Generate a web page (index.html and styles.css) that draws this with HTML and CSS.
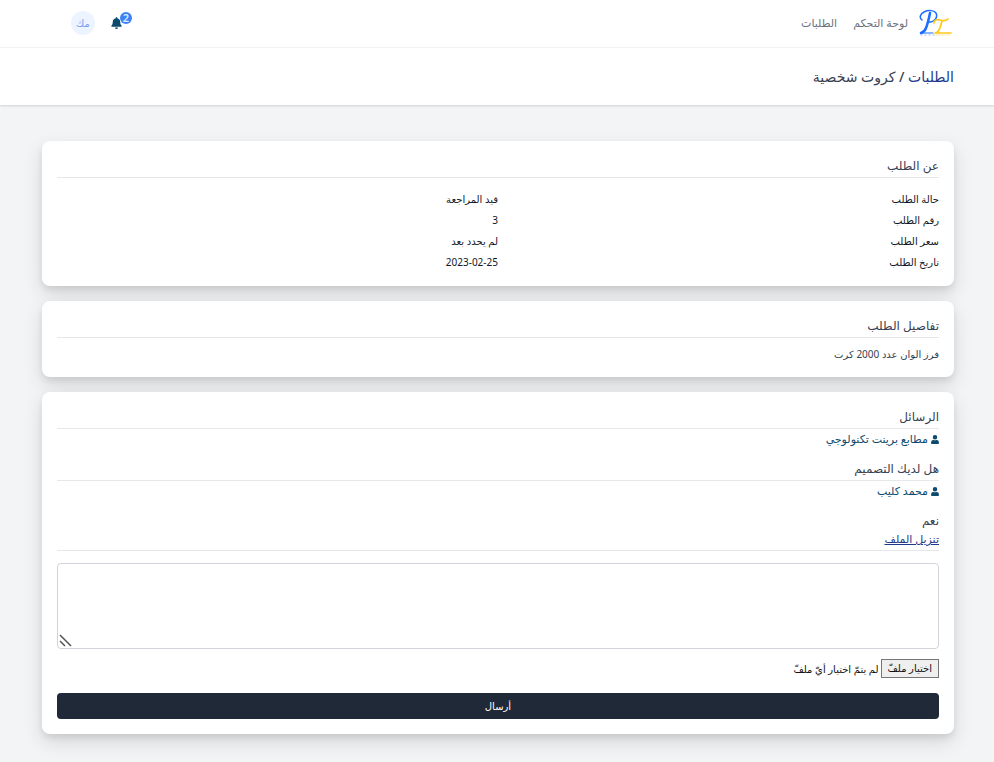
FILE: index.html
```
<!DOCTYPE html>
<html lang="ar" dir="rtl">
<head>
  <meta charset="UTF-8">
  <meta name="viewport" content="width=device-width, initial-scale=1.0">
  <title>الطلبات</title>
  <link rel="stylesheet" href="styles.css">
</head>
<body>

  <nav class="navbar">
    <div class="nav-links">
      <a href="#" class="logo" aria-label="PT">
        <svg width="34" height="28" viewBox="0 0 34 28" fill="none" stroke-linecap="round" stroke-linejoin="round">
          <path d="M3 11C0 9 1 5 5 3C9 1 15 1 17 4C19 8 16 12 12 13C11 13 10 13 9 13" stroke="#1a6dff" stroke-width="1.500"/>
          <path d="M11 4C10 9 9 14 7 19C6 22 5 23 2 24" stroke="#1a6dff" stroke-width="2.500"/>
          <path d="M2 24H14" stroke="#1a6dff" stroke-width="1.200"/>
          <path d="M15 14C15 11 18 10 21 11C24 12 27 12 29 10" stroke="#ffc81a" stroke-width="1.700"/>
          <path d="M23 12C22 16 21 19 20 21C19 23 18 24 16 24H32" stroke="#ffc81a" stroke-width="1.700"/>
          <path d="M2 26H15" stroke="#8fb8f5" stroke-width="1" stroke-dasharray="1 3"/>
          <path d="M17 26H31" stroke="#f7dc80" stroke-width="1" stroke-dasharray="1 2"/>
        </svg>
      </a>
      <a href="#">لوحة التحكم</a>
      <a href="#">الطلبات</a>
    </div>
    <div class="nav-user">
      <button type="button" class="bell" aria-label="الإشعارات">
        <svg width="11" height="12" viewBox="0 0 448 512" fill="#0c4a6e">
          <path d="M224 512c35 0 64-29 64-64H160c0 35 29 64 64 64zM439 362c-19-21-55-52-55-154 0-78-54-140-128-155V32a32 32 0 0 0-64 0v21C118 68 64 130 64 208c0 102-36 133-55 154-6 6-9 14-9 22 0 16 13 32 32 32h384c19 0 32-16 32-32 0-8-3-16-9-22z"/>
        </svg>
        <span class="badge">2</span>
      </button>
      <button type="button" class="avatar">مك</button>
    </div>
  </nav>

  <header class="page-header">
    <h1><a href="#">الطلبات</a> / كروت شخصية</h1>
  </header>

  <main class="content">
    <section class="card">
      <h2>عن الطلب</h2>
      <dl class="info">
        <dt>حالة الطلب</dt>
        <dd>قيد المراجعة</dd>
        <dt>رقم الطلب</dt>
        <dd>3</dd>
        <dt>سعر الطلب</dt>
        <dd>لم يحدد بعد</dd>
        <dt>تاريخ الطلب</dt>
        <dd>2023-02-25</dd>
      </dl>
    </section>

    <section class="card">
      <h2>تفاصيل الطلب</h2>
      <p class="details">فرز الوان عدد 2000 كرت</p>
    </section>

    <section class="card">
      <h2>الرسائل</h2>
      <article class="message">
        <h3>
          <svg width="8" height="9" viewBox="0 0 448 512" fill="#0c4a6e"><path d="M224 256a128 128 0 1 0 0-256 128 128 0 0 0 0 256zm90 32h-17a174 174 0 0 1-146 0h-17A134 134 0 0 0 0 422v42c0 27 21 48 48 48h352c27 0 48-21 48-48v-42a134 134 0 0 0-134-134z"/></svg>
          مطابع برينت تكنولوجي
        </h3>
        <p>هل لديك التصميم</p>
      </article>
      <article class="message">
        <h3>
          <svg width="8" height="9" viewBox="0 0 448 512" fill="#0c4a6e"><path d="M224 256a128 128 0 1 0 0-256 128 128 0 0 0 0 256zm90 32h-17a174 174 0 0 1-146 0h-17A134 134 0 0 0 0 422v42c0 27 21 48 48 48h352c27 0 48-21 48-48v-42a134 134 0 0 0-134-134z"/></svg>
          محمد كليب
        </h3>
        <p>نعم</p>
        <a href="#" class="download">تنزيل الملف</a>
      </article>

      <form class="reply">
        <textarea name="message" aria-label="الرسالة"></textarea>
        <div class="file-row">
          <input type="file" id="file" name="file" class="file-input">
          <label for="file" class="file-button">اختيار ملفّ</label>
          <span>لم يتمّ اختيار أيّ ملفّ</span>
        </div>
        <button type="submit" class="submit">أرسال</button>
      </form>
    </section>
  </main>

</body>
</html>
```
FILE: styles.css
```
* {
  box-sizing: border-box;
}

body {
  margin: 0;
  min-height: 100vh;
  background: #f3f4f6;
  color: #111827;
  font-family: "Noto Sans", "DejaVu Sans", sans-serif;
  font-size: 11px;
  line-height: 18px;
}

h1, h2, h3, p, dl, dd {
  margin: 0;
}

a {
  color: inherit;
  text-decoration: none;
}

button {
  font-family: inherit;
  cursor: pointer;
}

.navbar {
  display: flex;
  justify-content: space-between;
  align-items: center;
  height: 48px;
  padding: 0 41px 2px 71px;
  background: #fff;
  border-bottom: 1px solid #f3f4f6;
}

.nav-links {
  display: flex;
  align-items: center;
  gap: 16px;
  color: #6b7280;
}

.logo {
  display: flex;
  margin-left: -5px;
}

.nav-user {
  display: flex;
  align-items: center;
  gap: 16px;
}

.bell {
  position: relative;
  display: flex;
  width: 21px;
  padding: 0 10px 0 0;
  justify-content: flex-end;
  border: none;
  background: none;
}

.badge {
  position: absolute;
  top: -5px;
  right: 0;
  width: 12px;
  height: 12px;
  border-radius: 50%;
  background: #3b82f6;
  color: #dbeafe;
  font-size: 11px;
  font-weight: 600;
  line-height: 12px;
}

.avatar {
  width: 24px;
  height: 24px;
  padding: 0;
  border: none;
  border-radius: 50%;
  background: #ebf4ff;
  color: #7f9cf5;
  font-size: 10px;
}

.page-header {
  padding: 19px 40px;
  background: #fff;
  box-shadow: 0 1px 2px rgba(0, 0, 0, 0.15);
}

.page-header h1 {
  color: #374151;
  font-size: 14px;
  font-weight: 500;
  line-height: 19px;
}

.page-header a {
  color: #1e3a8a;
}

.content {
  display: flex;
  flex-direction: column;
  gap: 15px;
  padding: 36px 40px 28px 42px;
}

.card {
  padding: 15px 15px 13px;
  background: #fff;
  border-radius: 8px;
  box-shadow: 0 8px 20px rgba(0, 0, 0, 0.12), 0 4px 6px rgba(0, 0, 0, 0.08);
}

.card h2 {
  padding-bottom: 2px;
  border-bottom: 1px solid #e5e7eb;
  color: #374151;
  font-size: 12px;
  font-weight: 500;
  line-height: 19px;
}

.info {
  display: grid;
  grid-template-columns: 1fr 1fr;
  padding-top: 11px;
  line-height: 21px;
  font-size: 10px;
}

.details {
  padding: 7px 0 1px;
  color: #374151;
  font-size: 10px;
}

.message {
  padding: 1px 0 2px;
  border-bottom: 1px solid #e5e7eb;
}

.message h3 {
  display: flex;
  align-items: center;
  gap: 3px;
  margin-bottom: 12px;
  color: #0c4a6e;
  font-size: 11px;
  font-weight: 500;
}

.message p {
  color: #374151;
  font-size: 12px;
}

.download {
  display: table;
  color: #1e3a8a;
  text-decoration: underline;
}

.reply {
  padding: 12px 0 2px;
}

.reply textarea {
  display: block;
  width: 100%;
  height: 86px;
  border: 1px solid #d1d5db;
  border-radius: 4px;
  font-family: inherit;
  resize: both;
}

.reply textarea::-webkit-resizer {
  background: url("data:image/svg+xml,%3Csvg xmlns='http://www.w3.org/2000/svg' width='15' height='15' stroke='%23555' stroke-width='1.500'%3E%3Cpath d='M2 2L13 13M2 8L7 13'/%3E%3C/svg%3E") no-repeat;
}

.file-row {
  display: flex;
  align-items: center;
  gap: 2px;
  margin: 10px 0 15px;
  color: #111;
  font-size: 10px;
}

.file-input {
  position: absolute;
  width: 1px;
  height: 1px;
  opacity: 0;
}

.file-button {
  padding: 0 6px;
  border: 1px solid #767676;
  background: #efefef;
  line-height: 17px;
  cursor: pointer;
}

.submit {
  display: block;
  width: 100%;
  height: 26px;
  border: none;
  border-radius: 4px;
  background: #1f2937;
  color: #fff;
  font-size: 10px;
  font-weight: 500;
}

.submit:hover {
  background: #374151;
}
```
